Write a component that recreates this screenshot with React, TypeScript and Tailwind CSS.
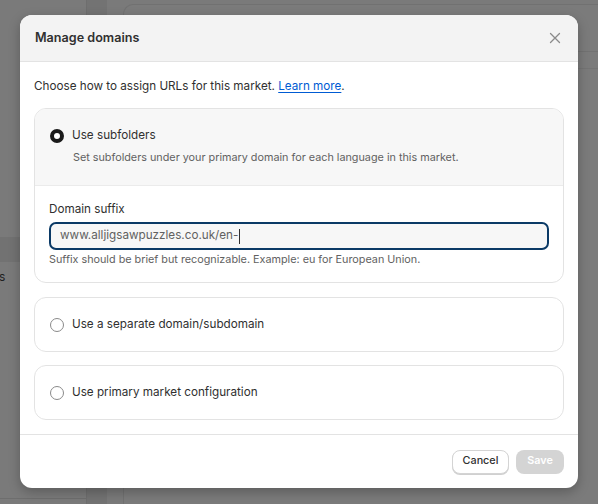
import React from "react";

function Radio({ checked }: { checked?: boolean }) {
  return checked ? (
    <span className="ml-[1px] w-[14px] h-[14px] rounded-full border-[4px] border-[#1a1a1a] bg-white shrink-0" />
  ) : (
    <span className="ml-[1px] w-[14px] h-[14px] rounded-full border border-[#8a8a8a] bg-white shrink-0" />
  );
}

export default function App() {
  return (
    <div
      className="relative w-[598px] h-[504px] overflow-hidden bg-[#7a7a7a]"
      style={{ fontFamily: "Inter, 'Noto Sans', sans-serif" }}
    >
      {/* dimmed page behind */}
      <div className="flex h-full">
        <div className="w-[87px] h-full flex flex-col border-r border-[#6e6e6e]">
          <div className="h-[237px]" />
          <div className="h-[25px] bg-[#727272]" />
          <div className="h-[30px] flex items-center text-[12px] text-[#1f1f1f] -ml-[1px]">s</div>
          <div className="flex-1" />
          <div className="h-[6px] border-t border-[#6e6e6e]" />
        </div>
        <div className="w-[20px] h-full bg-[#737373]" />
        <div className="flex-1 h-full pt-[4px] pl-[16px]">
          <div className="h-full rounded-tl-[10px] border-l border-t border-[#717171] bg-[#7b7b7b] flex flex-col">
            <div className="h-[46px]" />
            <div className="h-[17px] border-t border-[#727272]" />
            <div className="border-t border-[#747474]" />
          </div>
        </div>
      </div>

      {/* modal */}
      <div className="absolute left-[20px] top-[15px] w-[558px] h-[473px] bg-white rounded-[12px] overflow-hidden shadow-[0_4px_12px_rgba(0,0,0,0.25)] flex flex-col text-[11.7px] text-[#303030]">
        <div className="h-[47px] shrink-0 bg-[#f3f3f3] border-b border-[#e3e3e3] flex items-center justify-between pl-[15px] pr-[17px]">
          <div className="text-[12.6px] font-semibold text-[#303030]">Manage domains</div>
          <svg width="12" height="12" viewBox="0 0 12 12">
            <path d="M1.5 1.5 L10.5 10.5 M10.5 1.5 L1.5 10.5" stroke="#8a8a8a" strokeWidth="1.3" strokeLinecap="round" />
          </svg>
        </div>

        <div className="flex-1 px-[14px] pt-[14px] pb-[14px] flex flex-col">
          <div className="leading-[20px] text-[#303030]">
            Choose how to assign URLs for this market.{" "}
            <span className="text-[#005bd3] underline underline-offset-2">Learn more</span>.
          </div>

          <div className="mt-[12px] border border-[#e3e3e3] rounded-[12px] overflow-hidden">
            <div className="bg-[#f7f7f7] px-[14px] pt-[17px] pb-[17px] border-b border-[#ebebeb]">
              <div className="flex items-center gap-[8px] h-[20px]">
                <Radio checked />
                <span>Use subfolders</span>
              </div>
              <div className="mt-[2px] pl-[24px] leading-[20px] text-[10.8px] text-[#616161]">
                Set subfolders under your primary domain for each language in this market.
              </div>
            </div>
            <div className="px-[14px] pt-[13px] pb-[12px]">
              <div className="leading-[20px]">Domain suffix</div>
              <div className="mt-[3px] h-[28px] rounded-[7px] border-2 border-[#0b3a66] bg-[#f7f7f7] flex items-center pl-[9px] text-[#616161]">
                www.alljigsawpuzzles.co.uk/en-<span className="inline-block w-px h-[15px] bg-[#303030] ml-[1px]" />
              </div>
              <div className="leading-[20px] text-[10.8px] text-[#616161]">
                Suffix should be brief but recognizable. Example: eu for European Union.
              </div>
            </div>
          </div>

          <div className="mt-[14px] h-[55px] border border-[#e3e3e3] rounded-[12px] px-[14px] flex items-center gap-[8px]">
            <Radio />
            <span>Use a separate domain/subdomain</span>
          </div>

          <div className="mt-[13px] h-[55px] border border-[#e3e3e3] rounded-[12px] px-[14px] flex items-center gap-[8px]">
            <Radio />
            <span>Use primary market configuration</span>
          </div>
        </div>

        <div className="h-[54px] shrink-0 border-t border-[#e3e3e3] flex items-center justify-end gap-[7px] pr-[14px]">
          <div className="h-[24px] w-[57px] rounded-[8px] border border-[#d4d4d4] bg-white shadow-[0_1px_0_#d0d0d0] flex items-center justify-center text-[10.8px] font-medium text-[#303030]">
            Cancel
          </div>
          <div className="h-[24px] w-[48px] rounded-[8px] bg-[#d4d4d4] flex items-center justify-center text-[10.8px] font-semibold text-white">
            Save
          </div>
        </div>
      </div>
    </div>
  );
}
